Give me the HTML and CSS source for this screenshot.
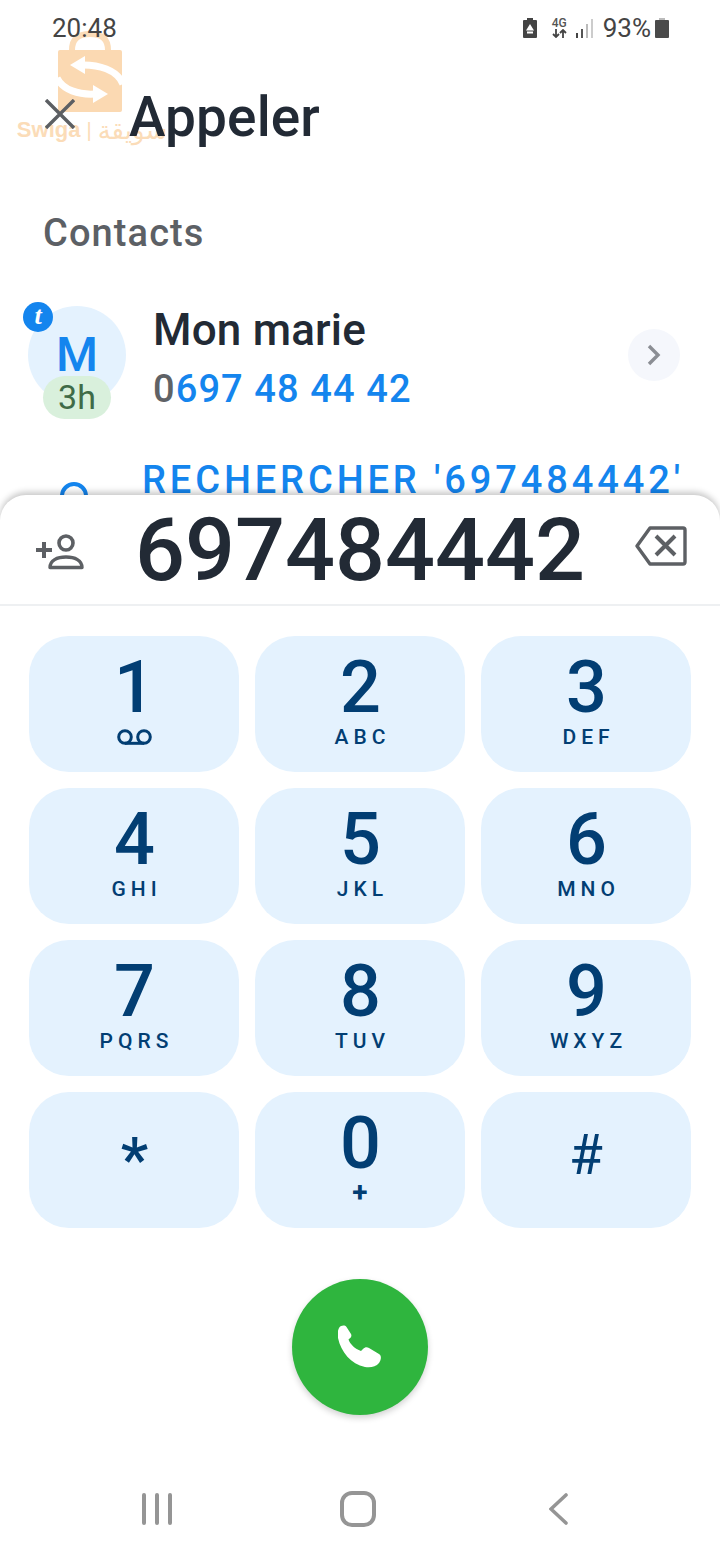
FILE: index.html
```html
<!DOCTYPE html>
<html lang="fr">
<head>
<meta charset="utf-8">
<title>Appeler</title>
<link rel="stylesheet" href="styles.css">
</head>
<body>
<div class="phone">
  <div class="watermark">
    <svg class="wm-bag" width="66" height="84" viewBox="0 0 66 84">
      <path d="M15 20C15 9 21 4 33 4C45 4 51 9 51 20" fill="none" stroke="#fbdcb8" stroke-width="6"/>
      <path d="M3 20H63a2 2 0 0 1 2 2V80a2 2 0 0 1-2 2H3a2 2 0 0 1-2-2V22a2 2 0 0 1 2-2z" fill="#fbd9b2"/>
      <path d="M66 54C60 40 42 34 22 35" fill="none" stroke="#fff" stroke-width="7"/>
      <path d="M13 35L28 26V44z" fill="#fff"/>
      <path d="M0 48C6 60 22 65 38 64" fill="none" stroke="#fff" stroke-width="7"/>
      <path d="M51 64L36 55V73z" fill="#fff"/>
    </svg>
    <div class="wm-text"><span>Swiga</span><i>|</i><span class="wm-ar">سويقة</span></div>
  </div>

  <div class="top">
    <div class="status">
      <span class="time">20:48</span>
      <div class="status-right">
        <svg class="st-bat" width="14" height="20" viewBox="0 0 14 20"><path d="M4 0h6v2h3a1 1 0 0 1 1 1v16a1 1 0 0 1-1 1H1a1 1 0 0 1-1-1V3a1 1 0 0 1 1-1h3z" fill="#444"/><path d="M7 6l4 6.500H3zM4 13.500h6v2H4z" fill="#fff"/></svg>
        <div class="net"><span class="net-g">4G</span><svg width="15" height="9" viewBox="0 0 15 9"><path d="M4 0v8M1 5l3 3 3-3M11 9V1M8 4l3-3 3 3" fill="none" stroke="#444" stroke-width="1.800"/></svg></div>
        <svg class="signal" width="17" height="19" viewBox="0 0 17 19"><rect x="0" y="14" width="2" height="5" fill="#444"/><rect x="5" y="10" width="2" height="9" fill="#555"/><rect x="10" y="5" width="2" height="14" fill="#bbb"/><rect x="15" y="0" width="2" height="19" fill="#ccc"/></svg>
        <span class="pct">93%</span>
        <svg width="14" height="20" viewBox="0 0 14 20"><rect x="4" width="6" height="3" fill="#bbb"/><rect y="2" width="14" height="18" rx="1" fill="#4a4a4a"/></svg>
      </div>
    </div>

    <header class="title-bar">
      <svg class="close" width="30" height="30" viewBox="0 0 30 30"><path d="M1 1l28 28M29 1L1 29" stroke="#5c5f63" stroke-width="3.400" fill="none"/></svg>
      <h1>Appeler</h1>
    </header>

    <h2 class="section">Contacts</h2>

    <div class="contact">
      <div class="avatar">
        <span class="avatar-letter">M</span>
        <span class="badge-t">t</span>
        <span class="badge-time">3h</span>
      </div>
      <div class="contact-text">
        <div class="name">Mon marie</div>
        <div class="number"><span class="num-dim">0</span>697 48 44 42</div>
      </div>
      <span class="chevron"><svg width="14" height="22" viewBox="0 0 14 22"><path d="M2 2l9 9-9 9" fill="none" stroke="#8b8e94" stroke-width="3.400"/></svg></span>
    </div>

    <div class="search-row">
      <svg class="search-ico" width="28" height="32" viewBox="0 0 28 32"><circle cx="14" cy="14" r="12" fill="none" stroke="#1485ee" stroke-width="4"/></svg>
      <span class="search-text">RECHERCHER '697484442'</span>
    </div>
  </div>

  <section class="sheet">
    <div class="display">
      <svg class="add-contact" width="48" height="36" viewBox="0 0 48 36"><path d="M0 16h16M8 8v16" stroke="#5d6064" stroke-width="4" fill="none"/><circle cx="30" cy="9" r="7" fill="none" stroke="#5d6064" stroke-width="3.600"/><path d="M14 33.500h32c0-7-7-10.500-16-10.500s-16 3.500-16 10.500z" fill="none" stroke="#5d6064" stroke-width="3.400" stroke-linejoin="round"/></svg>
      <div class="dialed">697484442</div>
      <svg class="backspace" width="52" height="40" viewBox="0 0 52 40"><path d="M15 2h33a2 2 0 0 1 2 2v32a2 2 0 0 1-2 2H15L2 20z" fill="none" stroke="#5d6064" stroke-width="3.400" stroke-linejoin="round"/><path d="M21 10l19 19M40 10L21 29" stroke="#5d6064" stroke-width="4" fill="none"/></svg>
    </div>

    <div class="keypad">
      <button class="key"><span class="digit">1</span><svg class="vm" width="35" height="16" viewBox="0 0 35 16"><circle cx="8" cy="8" r="6.300" fill="none" stroke="#023e73" stroke-width="3"/><circle cx="27" cy="8" r="6.300" fill="none" stroke="#023e73" stroke-width="3"/><path d="M8 14.300h19" stroke="#023e73" stroke-width="3"/></svg></button>
      <button class="key"><span class="digit">2</span><span class="letters">ABC</span></button>
      <button class="key"><span class="digit">3</span><span class="letters">DEF</span></button>
      <button class="key"><span class="digit">4</span><span class="letters">GHI</span></button>
      <button class="key"><span class="digit">5</span><span class="letters">JKL</span></button>
      <button class="key"><span class="digit">6</span><span class="letters">MNO</span></button>
      <button class="key"><span class="digit">7</span><span class="letters">PQRS</span></button>
      <button class="key"><span class="digit">8</span><span class="letters">TUV</span></button>
      <button class="key"><span class="digit">9</span><span class="letters">WXYZ</span></button>
      <button class="key"><span class="digit sym">*</span></button>
      <button class="key"><span class="digit">0</span><span class="letters plus">+</span></button>
      <button class="key"><span class="digit sym hash">#</span></button>
    </div>

    <div class="call-wrap">
      <button class="call">
        <svg width="44" height="44" viewBox="0 0 44 44"><path d="M1 3C3 0 7 0 8.500 2L13 9C14 11 13 13 11 14L10.500 14.500C12 19 17 24 23 26L25 24C27 22 29 22 31 23L41 29C44 31 43 35 41 38C38 42 32 43 27 42C13 39 3 27 0 13C-.5 9-.5 6 1 3Z" fill="#fff"/></svg>
      </button>
    </div>

    <nav class="navbar">
      <svg width="30" height="32" viewBox="0 0 30 32"><path d="M2 2v28M15 2v28M28 2v28" stroke="#959595" stroke-width="4" stroke-linecap="round"/></svg>
      <svg class="nav-home" width="36" height="36" viewBox="0 0 36 36"><rect x="2" y="2" width="32" height="32" rx="10" fill="none" stroke="#959595" stroke-width="4"/></svg>
      <svg width="20" height="32" viewBox="0 0 20 32"><path d="M17 2L2 16l15 14" fill="none" stroke="#959595" stroke-width="3.600" stroke-linecap="round"/></svg>
    </nav>
  </section>
</div>
</body>
</html>
```

FILE: styles.css
```css
* { box-sizing: border-box; }
html, body { margin: 0; padding: 0; background: #fff; }
body { font-family: Roboto, "Liberation Sans", sans-serif; }
.phone { position: relative; width: 720px; height: 1560px; overflow: hidden; background: #fff; }

.watermark { position: absolute; left: 19px; top: 30px; width: 146px; display: flex; flex-direction: column; align-items: center; }
.wm-bag { display: block; margin-left: -4px; }
.wm-text { display: flex; align-items: center; gap: 6px; height: 28px; margin-top: 2px; color: #fbdcb8; font: 700 22px/28px "Liberation Sans", sans-serif; white-space: nowrap; }
.wm-text i { font-style: normal; font-weight: 400; font-size: 20px; }
.wm-ar { font-family: "DejaVu Sans", sans-serif; font-size: 26px; font-weight: 400; }

.top { position: relative; height: 495px; overflow: hidden; }
.status { display: flex; justify-content: space-between; align-items: center; height: 56px; padding: 0 51px 0 52px; }
.time { font-size: 26px; color: #444; }
.status-right { display: flex; align-items: center; }
.st-bat { margin-right: 15px; }
.net { display: flex; flex-direction: column; align-items: center; width: 15px; margin-right: 9px; }
.net-g { font-size: 12px; line-height: 11px; font-weight: 500; color: #555; }
.signal { margin-right: 10px; }
.pct { font-size: 26px; color: #444; margin-right: 4px; }

.title-bar { display: flex; align-items: center; height: 62px; padding-left: 45px; margin-top: 30px; }
.close { margin-bottom: 6px; }
.title-bar h1 { margin: 0 0 0 54px; font-size: 55px; line-height: 62px; font-weight: 500; letter-spacing: .1px; color: #222a35; }
.section { margin: 63px 0 0 43px; font-size: 38px; line-height: 44px; font-weight: 500; letter-spacing: 1.1px; color: #5c6065; }

.contact { display: flex; align-items: center; height: 110px; margin-top: 45px; padding-left: 28px; }
.avatar { position: relative; width: 98px; height: 98px; border-radius: 50%; background: #e4f2fe; flex: none; display: flex; justify-content: center; }
.avatar-letter { font-size: 48px; line-height: 42px; margin-top: 28px; height: 42px; font-weight: 500; color: #1485ee; }
.badge-t { position: absolute; left: -5px; top: -4px; width: 30px; height: 30px; border-radius: 50%; background: #1485ee; color: #fff; font: italic 700 26px/28px "Liberation Serif", serif; text-align: center; }
.badge-time { position: absolute; left: 15px; top: 70px; width: 68px; height: 43px; border-radius: 22px; background: #d9f0dc; color: #3f6b47; font-size: 34px; line-height: 43px; text-align: center; }
.contact-text { margin-left: 27px; flex: 1; padding-top: 9px; }
.name { font-size: 44px; line-height: 59px; font-weight: 500; letter-spacing: .2px; color: #222a35; }
.number { font-size: 38px; line-height: 59px; font-weight: 500; letter-spacing: 1.1px; color: #1485ee; }
.num-dim { color: #5f6266; }
.chevron { width: 52px; height: 52px; border-radius: 50%; background: #f5f7fc; display: flex; align-items: center; justify-content: center; margin-right: 40px; }

.search-row { display: flex; align-items: flex-start; padding-left: 60px; margin-top: 47px; }
.search-ico { margin-top: 25px; }
.search-text { margin-left: 54px; font-size: 38px; line-height: 46px; font-weight: 500; letter-spacing: 3.9px; color: #1485ee; white-space: nowrap; }

.sheet { position: relative; height: 1065px; background: #fff; border-radius: 26px 26px 0 0; box-shadow: 0 -3px 6px rgba(0,0,0,.22); }
.display { position: relative; display: flex; justify-content: center; align-items: center; height: 111px; border-bottom: 2px solid #eef0f2; }
.dialed { font-size: 88px; line-height: 108px; font-weight: 500; padding-top: 1px; color: #222a35; }
.add-contact { position: absolute; left: 36px; top: 39px; }
.backspace { position: absolute; right: 33px; top: 31px; }

.keypad { display: grid; grid-template-columns: repeat(3, 210px); grid-auto-rows: 136px; gap: 16px; justify-content: center; margin-top: 30px; }
.key { display: flex; flex-direction: column; align-items: center; padding: 16px 0 0; border: 0; border-radius: 40px; background: #e4f2fe; color: #023e73; font-family: inherit; }
.digit { display: block; font-size: 72px; line-height: 72px; font-weight: 500; margin-left: 1px; }
.sym { font-size: 62px; line-height: 90px; margin-top: 7px; }
.hash { font-size: 55px; font-weight: 400; margin-top: 2px; margin-left: 0; }
.letters { display: block; font-size: 21px; line-height: 24px; font-weight: 500; letter-spacing: 5px; margin-right: -5px; margin-top: 1px; }
.plus { font-size: 28px; font-weight: 700; line-height: 24px; }
.vm { display: block; margin-top: 5px; }

.call-wrap { display: flex; justify-content: center; margin-top: 51px; }
.call { display: flex; align-items: center; justify-content: center; width: 136px; height: 136px; padding: 0; border: 0; border-radius: 50%; background: #2fb53e; box-shadow: 0 3px 6px rgba(0,0,0,.18); }

.navbar { display: flex; justify-content: space-between; align-items: center; margin-top: 76px; padding: 0 151px 0 142px; }
.nav-home { margin-right: 5px; }
```
